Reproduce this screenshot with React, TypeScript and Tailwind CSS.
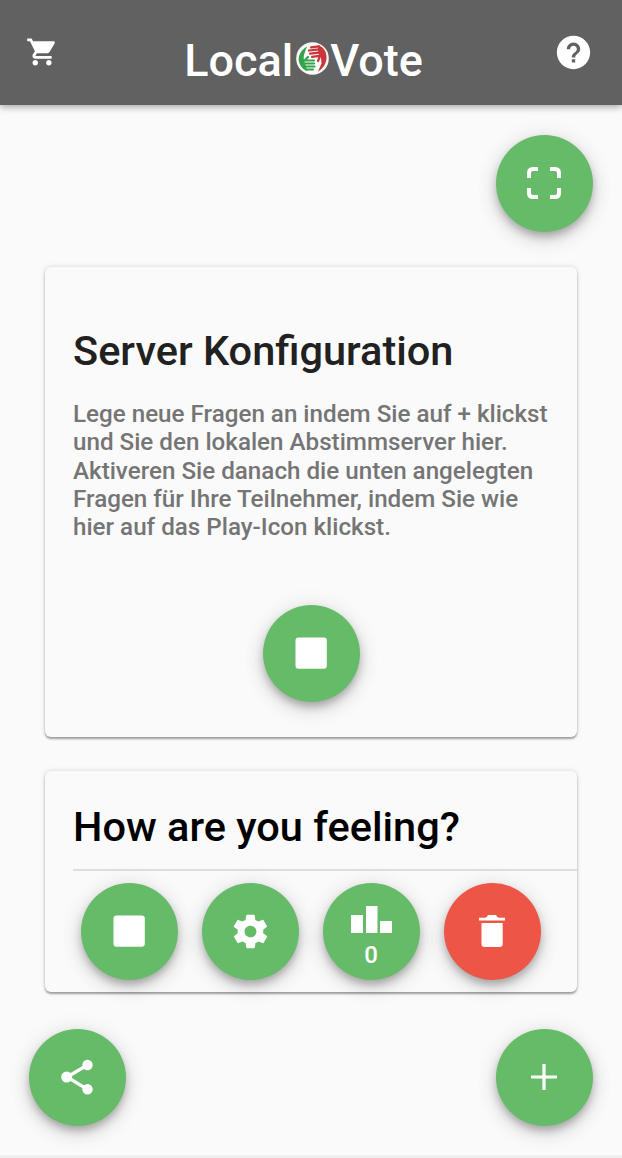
import React from "react";
import { IoMdCart, IoMdHelpCircle, IoMdSettings } from "react-icons/io";

interface FabProps {
  label: string;
  color?: "success" | "danger";
  children: React.ReactNode;
}

function Fab({ label, color = "success", children }: FabProps) {
  return (
    <button
      aria-label={label}
      className={`flex h-[97px] w-[97px] shrink-0 flex-col items-center justify-center rounded-full pb-px pr-px text-white shadow-[0_5px_9px_-1px_rgba(0,0,0,0.26),0_8px_20px_0_rgba(0,0,0,0.12),0_1px_24px_0_rgba(0,0,0,0.07)] ${
        color === "danger" ? "bg-[#ed5547]" : "bg-[#66bb69]"
      }`}
    >
      {children}
    </button>
  );
}

function StopIcon() {
  return (
    <svg className="h-8 w-8" viewBox="0 0 32 32" fill="currentColor">
      <rect x="0.500" y="0.500" width="31.300" height="31.300" rx="3" />
    </svg>
  );
}

function ScanIcon() {
  return (
    <svg
      className="h-8 w-[34px]"
      viewBox="0 0 34 32"
      fill="none"
      stroke="currentColor"
      strokeWidth="4"
    >
      <path d="M2 11V6Q2 2 6 2H11M23 2h5Q32 2 32 6V11M32 21v5Q32 30 28 30H23M11 30H6Q2 30 2 26V21" />
    </svg>
  );
}

function PodiumIcon() {
  return (
    <svg
      className="mt-3 h-[27px] w-[41px]"
      viewBox="0 0 41 27"
      fill="currentColor"
    >
      <path d="M0 9h12v18H0zM15 0h11.500v27H15zM29 15h12v12H29z" />
    </svg>
  );
}

function TrashIcon() {
  return (
    <svg className="h-8 w-[26px]" viewBox="0 0 26 32" fill="currentColor">
      <path d="M0 2.700h6Q8 2.500 9 0h8q1 2.500 3 2.700H26v2.800H0zM2.500 8h21.200v21q0 3-3 3H5.500q-3 0-3-3z" />
    </svg>
  );
}

function ShareIcon() {
  return (
    <svg className="h-[36px] w-[32px]" viewBox="0 0 32 36" fill="currentColor">
      <path
        d="M26.500 6 6 18l20.500 12.300"
        fill="none"
        stroke="currentColor"
        strokeWidth="3.300"
      />
      <circle cx="26.500" cy="6" r="5.200" />
      <circle cx="5.700" cy="18" r="5.500" />
      <circle cx="26.500" cy="30.300" r="5.200" />
    </svg>
  );
}

function AddIcon() {
  return (
    <svg className="h-[26px] w-[26px]" viewBox="0 0 26 26" fill="currentColor">
      <path d="M11.400 0h3.200v11.400H26v3.200H14.600V26h-3.200V14.600H0v-3.200h11.400z" />
    </svg>
  );
}

// Two hands reaching around each other, green from below and red from above
function HandsLogo() {
  return (
    <svg className="h-[33px] w-[33px]" viewBox="0 0 33 33" fill="none">
      <circle cx="16.500" cy="16.500" r="16.300" fill="#f8faf7" />
      <path
        d="M11 4.500C4.500 8 1 15 3.500 21.500c1.500 4 4.500 6.500 8 7.500l-2-6L8 18c-1-4 1-8 3-13.500z"
        fill="#35a34b"
      />
      <path
        d="M8 18.500h10M7.500 21.500h10.500M9 24.500h9.500M10 27.500h7M9 18l3-3"
        stroke="#35a34b"
        strokeWidth="2.200"
        strokeLinecap="round"
      />
      <path
        d="M22 3c6 2 9 7.500 8.500 13.500C30 22 27.500 26 22 29.500l3.500-8L25 16l-3-5z"
        fill="#cc363b"
      />
      <path
        d="M15 5.300l8-1M13 8.500l10-1.200M14 11.700l11-1.400M16 14.800l9-1.200M24 14l-2 5"
        stroke="#cc363b"
        strokeWidth="2.200"
        strokeLinecap="round"
      />
    </svg>
  );
}

export default function App() {
  return (
    <div className="flex h-[1158px] w-[622px] flex-col overflow-hidden border-b-[3px] border-[#f0f0f0] bg-[#fafafa] font-['Roboto',sans-serif] font-medium">
      <header className="z-10 flex h-[105px] shrink-0 items-start justify-between bg-[#616161] pl-[23px] pr-7 text-white shadow-[0_2px_7px_rgba(0,0,0,0.35)]">
        <button aria-label="Shop" className="mr-[2px] mt-[35px] pl-px">
          <IoMdCart className="h-[34px] w-[34px]" />
        </button>
        <h1 className="mr-[6px] mt-[33px] flex items-center text-[45px] leading-[56px]">
          Local
          <span className="-mt-[6px] ml-[3px] mr-px">
            <HandsLogo />
          </span>
          Vote
        </h1>
        <button aria-label="Help" className="mt-8">
          <IoMdHelpCircle className="h-[41px] w-[41px]" />
        </button>
      </header>

      <main className="flex flex-col">
        <div className="flex justify-end pr-[29px] pt-[30px]">
          <Fab label="Fullscreen">
            <ScanIcon />
          </Fab>
        </div>

        {/* Server card */}
        <section className="mx-[45px] mt-[35px] flex h-[470px] flex-col rounded-md bg-[#fafafa] px-7 pt-[59px] shadow-[0_2px_2px_rgba(0,0,0,0.32),0_0_5px_rgba(0,0,0,0.15)]">
          <h2 className="text-[41.5px] leading-[50px] text-[#212121]">
            Server Konfiguration
          </h2>
          <p className="mt-6 whitespace-nowrap text-[24.2px] leading-[28.3px] text-[#757575]">
            Lege neue Fragen an indem Sie auf + klickst
            <br />
            und Sie den lokalen Abstimmserver hier.
            <br />
            Aktiveren Sie danach die unten angelegten
            <br />
            Fragen für Ihre Teilnehmer, indem Sie wie
            <br />
            hier auf das Play-Icon klickst.
          </p>
          <div className="mt-16 flex justify-center">
            <Fab label="Stop server">
              <StopIcon />
            </Fab>
          </div>
        </section>

        {/* Question card */}
        <section className="mx-[45px] mt-[34px] h-[221px] rounded-md bg-[#fafafa] pl-7 shadow-[0_2px_2px_rgba(0,0,0,0.32),0_0_5px_rgba(0,0,0,0.15)]">
          <h2 className="h-[100px] border-b-2 border-[#dedede] pt-[31px] text-[41.5px] leading-[50px] text-black">
            How are you feeling?
          </h2>
          <div className="flex gap-6 pl-2 pt-3">
            <Fab label="Stop question">
              <StopIcon />
            </Fab>
            <Fab label="Settings">
              <IoMdSettings className="h-[41px] w-[41px]" />
            </Fab>
            <Fab label="Results">
              <PodiumIcon />
              <span className="mt-2 text-[24px] leading-7">0</span>
            </Fab>
            <Fab label="Delete" color="danger">
              <TrashIcon />
            </Fab>
          </div>
        </section>

        <div className="mt-[37px] flex justify-between px-[29px]">
          <Fab label="Share">
            <ShareIcon />
          </Fab>
          <Fab label="Add question">
            <AddIcon />
          </Fab>
        </div>
      </main>
    </div>
  );
}
